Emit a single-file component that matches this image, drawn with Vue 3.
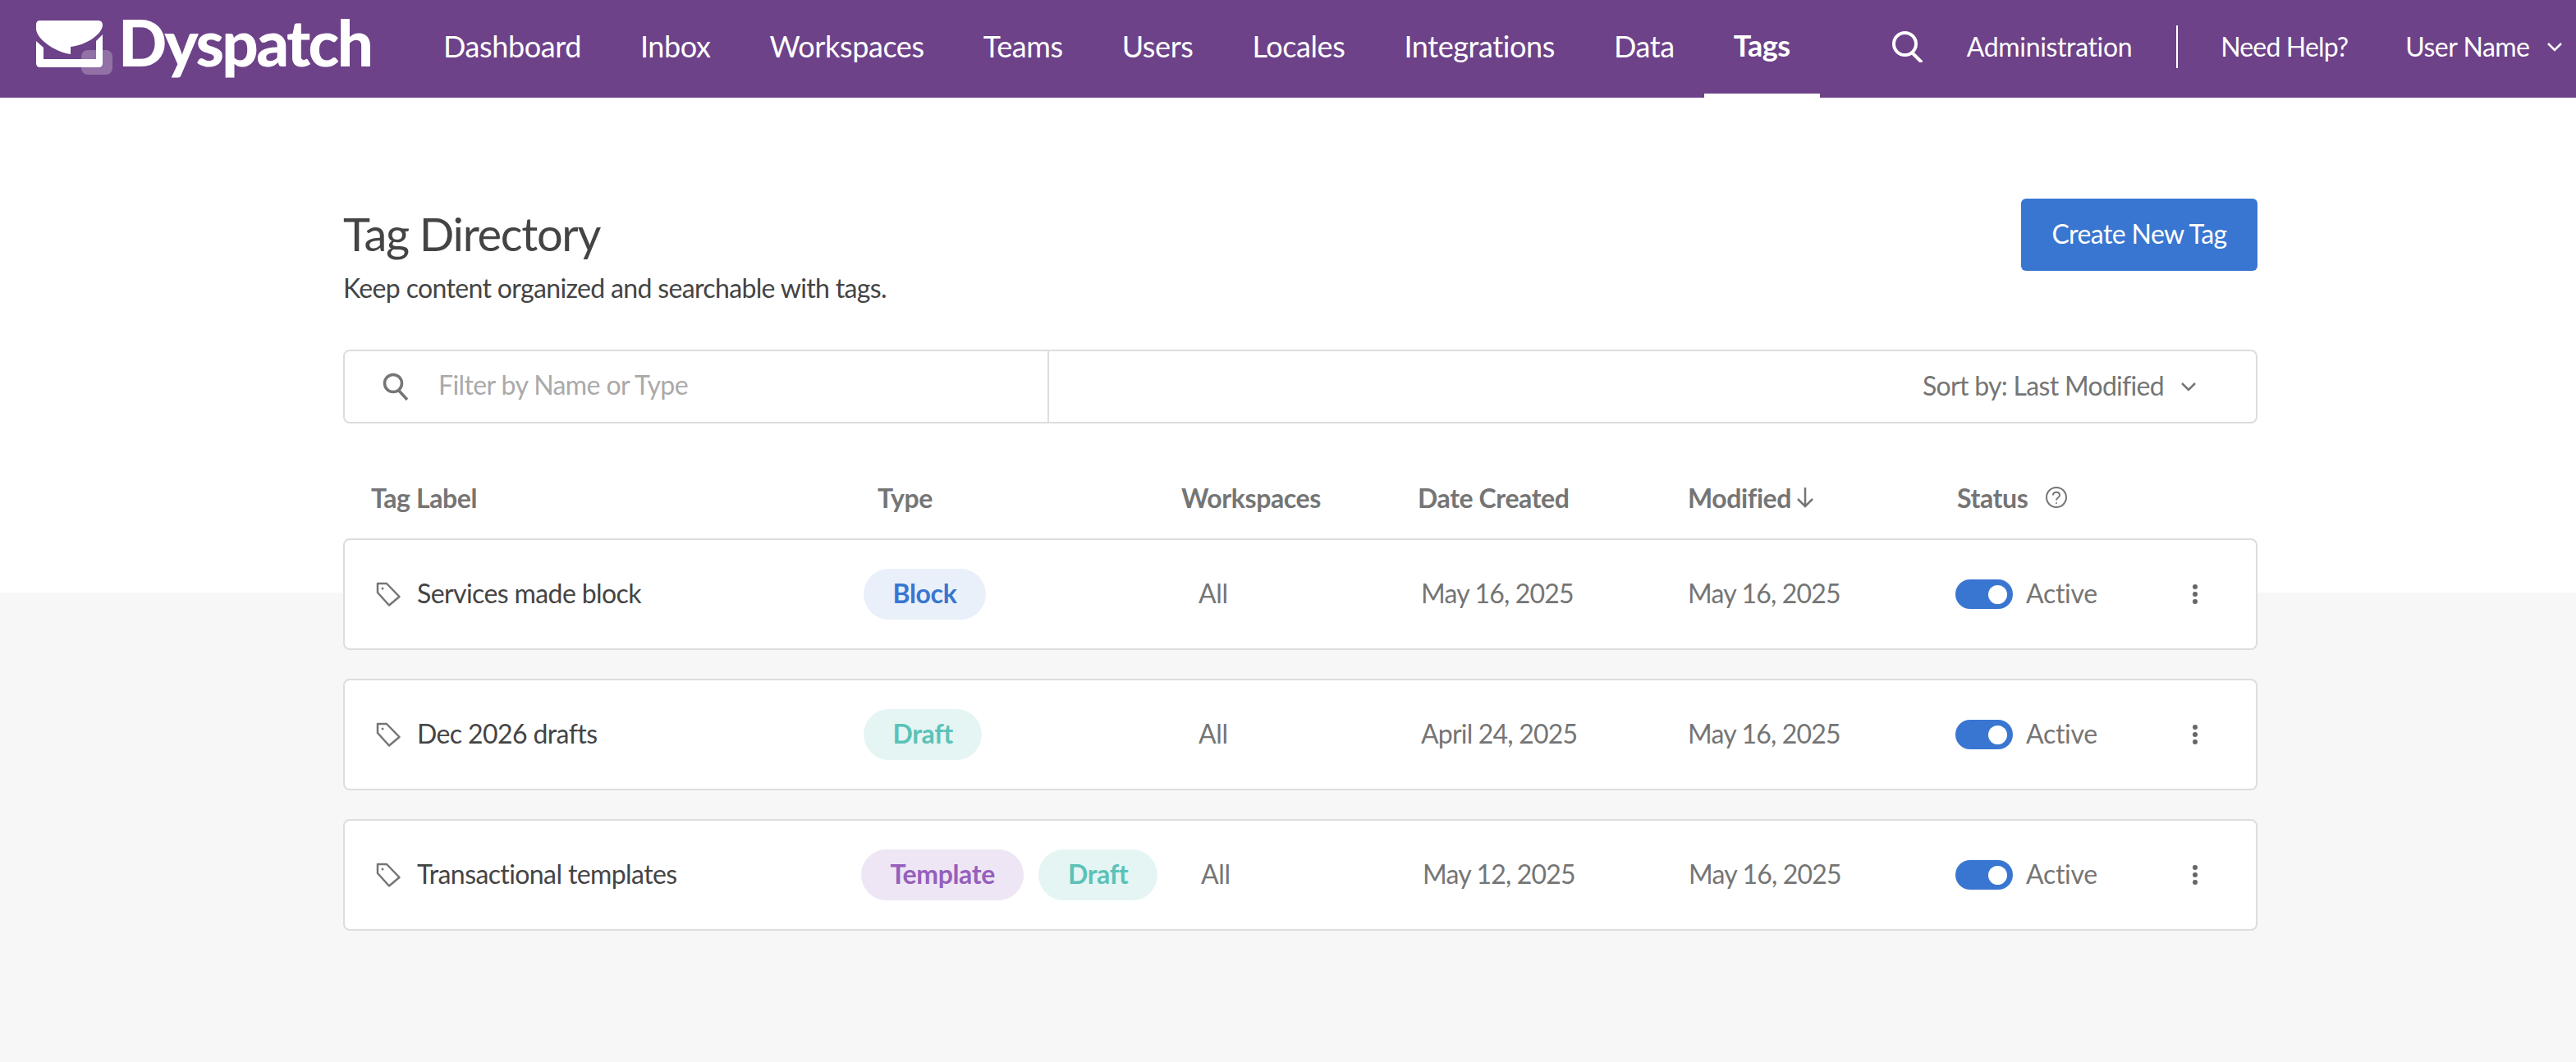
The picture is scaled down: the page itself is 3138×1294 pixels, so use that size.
<script setup>
const navItems = ['Dashboard', 'Inbox', 'Workspaces', 'Teams', 'Users', 'Locales', 'Integrations', 'Data', 'Tags'];

const columns = [
    { label: 'Tag Label' },
    { label: 'Type' },
    { label: 'Workspaces' },
    { label: 'Date Created' },
    { label: 'Modified', sorted: true },
    { label: 'Status', help: true },
];

const tags = [
    { name: 'Services made block', types: ['Block'], created: 'May 16, 2025', modified: 'May 16, 2025' },
    { name: 'Dec 2026 drafts', types: ['Draft'], created: 'April 24, 2025', modified: 'May 16, 2025' },
    { name: 'Transactional templates', types: ['Template', 'Draft'], created: 'May 12, 2025', modified: 'May 16, 2025' },
];
</script>

<template>
    <div class="page">
        <header class="nav">
            <div class="brand">
                <svg class="brand-mark" viewBox="40 20 100 74" width="100" height="74">
                    <path fill="#fff" d="M49 25H120Q125 25 125 31C124 42 105 55 86 57V66C70 64 46 50 44 36V30Q44 25 49 25Z" />
                    <path fill="#fff" d="M44 50L53 58V72H117V50L125 42V77Q125 82 120 82H49Q44 82 44 77Z" />
                    <rect x="99" y="61" width="38" height="30" rx="8" fill="#fff" fill-opacity="0.25" />
                </svg>
                <span class="brand-name">Dyspatch</span>
            </div>
            <nav class="nav-links">
                <a v-for="item in navItems" :key="item" :class="['nav-link', { 'nav-link--active': item === 'Tags' }]">{{ item }}</a>
            </nav>
            <div class="nav-right">
                <svg class="nav-search" viewBox="0 0 38 38" width="38" height="38" fill="none" stroke="#fff" stroke-width="4">
                    <circle cx="15.5" cy="15.5" r="13.5" />
                    <path d="M23 25L36 38" />
                </svg>
                <a class="nav-admin">Administration</a>
                <span class="nav-divider"></span>
                <a class="nav-help">Need Help?</a>
                <a class="nav-user">User Name</a>
                <svg viewBox="0 0 20 12" width="20" height="12" fill="none" stroke="#fff" stroke-width="2.5">
                    <path d="M2 2L10 10L18 2" />
                </svg>
            </div>
        </header>

        <div class="content">
            <main class="main">
                <div class="heading">
                    <div>
                        <h1 class="title">Tag Directory</h1>
                        <p class="subtitle">Keep content organized and searchable with tags.</p>
                    </div>
                    <button class="create-btn" type="button">Create New Tag</button>
                </div>

                <div class="toolbar">
                    <div class="filter">
                        <svg viewBox="0 0 32 34" width="32" height="34" fill="none" stroke="#757575" stroke-width="3.5">
                            <circle cx="13" cy="13" r="10.5" />
                            <path d="M20 22L30 33" />
                        </svg>
                        <span class="filter-placeholder">Filter by Name or Type</span>
                    </div>
                    <div class="sort">
                        <span class="sort-label">Sort by: Last Modified</span>
                        <svg viewBox="0 0 20 12" width="20" height="12" fill="none" stroke="#757575" stroke-width="2.5">
                            <path d="M2 2L10 10L18 2" />
                        </svg>
                    </div>
                </div>

                <div class="columns">
                    <div v-for="col in columns" :key="col.label" class="column">
                        {{ col.label }}
                        <svg v-if="col.sorted" class="sort-arrow" viewBox="0 0 22 26" width="22" height="26" fill="none" stroke="#757575" stroke-width="2.5">
                            <path d="M11 1V24M2 15L11 24L20 15" />
                        </svg>
                        <svg v-if="col.help" class="help-icon" viewBox="0 0 26 26" width="26" height="26" fill="none" stroke="#757575" stroke-width="2">
                            <circle cx="13" cy="13" r="12" />
                            <path d="M9 10.5C9 5.5 17 5.5 17 10.5C17 13.5 13 13 13 16.5" />
                            <circle cx="13" cy="20" r="1" fill="#757575" stroke="none" />
                        </svg>
                    </div>
                </div>

                <div class="rows">
                    <div v-for="tag in tags" :key="tag.name" :class="['row', { 'row--wide': tag.types.length > 1 }]">
                        <div class="row-name">
                            <svg viewBox="0 0 30 30" width="30" height="30" fill="none" stroke="#757575" stroke-width="2.5" stroke-linejoin="round">
                                <path d="M2 2H13L28.5 18L16 28.5L2 13Z" />
                                <circle cx="8" cy="8" r="1.5" fill="#757575" stroke="none" />
                            </svg>
                            <span class="row-label">{{ tag.name }}</span>
                        </div>
                        <div class="row-types">
                            <span v-for="type in tag.types" :key="type" :class="['pill', `pill--${type.toLowerCase()}`]">{{ type }}</span>
                        </div>
                        <div class="cell">All</div>
                        <div class="cell cell--date">{{ tag.created }}</div>
                        <div class="cell cell--date">{{ tag.modified }}</div>
                        <div class="status">
                            <span class="toggle"><span class="toggle-knob"></span></span>
                            <span class="cell">Active</span>
                        </div>
                        <div class="dots"><i></i><i></i><i></i></div>
                    </div>
                </div>
            </main>
        </div>
    </div>
</template>

<style>
html,
body {
    margin: 0;
    background: #f7f7f7;
}
</style>

<style scoped>
.page {
    height: 1294px;
    overflow: hidden;
    font-family: Lato, "Open Sans", sans-serif;
    font-size: 32px;
    letter-spacing: -0.6px;
    white-space: nowrap;
    color: #444;
}

.nav {
    display: flex;
    align-items: center;
    height: 119px;
    background: #6d4289;
    color: #fff;
}

.brand {
    display: flex;
    align-items: center;
    flex: none;
    width: 504px;
    height: 119px;
}

.brand-mark {
    flex: none;
    align-self: flex-start;
    margin: 20px 0 0 40px;
}

.brand-name {
    margin: -17px 0 0 4px;
    font-size: 78px;
    font-weight: 900;
    letter-spacing: -2.6px;
    line-height: 1;
}

.nav-links {
    display: flex;
    align-self: stretch;
}

.nav-link {
    display: flex;
    align-items: center;
    box-sizing: border-box;
    padding: 0 36px 8px;
    font-size: 36px;
    letter-spacing: -0.4px;
}

.nav-link--active {
    padding-bottom: 5px;
    font-weight: 700;
    border-bottom: 5px solid #fff;
}

.nav-right {
    display: flex;
    align-items: center;
    margin-left: 88px;
    padding-bottom: 6px;
    letter-spacing: -0.35px;
}

.nav-search {
    margin-right: 53px;
}

.nav-divider {
    width: 2px;
    height: 52px;
    margin: 0 52px 0 54px;
    background: #fff;
}

.nav-help {
    letter-spacing: -0.85px;
}

.nav-user {
    margin-left: 70px;
    margin-right: 20px;
    letter-spacing: -0.5px;
}

.content {
    height: 1175px;
    background: linear-gradient(#fff 603px, #f7f7f7 603px);
}

.main {
    width: 2332px;
    margin-left: 418px;
}

.heading {
    display: flex;
    align-items: flex-start;
    justify-content: space-between;
    padding-top: 123px;
}

.title {
    margin: -1px 0 0;
    font-size: 56px;
    font-weight: 400;
    line-height: 88px;
    letter-spacing: -1.3px;
}

.subtitle {
    margin: 0;
    line-height: 44px;
    letter-spacing: -0.65px;
}

.create-btn {
    width: 288px;
    height: 88px;
    padding: 0 0 4px;
    border: 0;
    border-radius: 6px;
    background: #3976d1;
    color: #fff;
    font: inherit;
    letter-spacing: inherit;
    cursor: pointer;
}

.toolbar {
    display: flex;
    box-sizing: border-box;
    height: 90px;
    margin-top: 53px;
    border: 2px solid #ddd;
    border-radius: 8px;
    background: #fff;
}

.filter {
    display: flex;
    align-items: center;
    gap: 36px;
    box-sizing: border-box;
    width: 858px;
    padding-left: 46px;
    border-right: 2px solid #ddd;
}

.filter-placeholder {
    padding-bottom: 6px;
    color: #aaa;
}

.sort {
    display: flex;
    flex: 1;
    align-items: center;
    justify-content: flex-end;
    gap: 20px;
    padding-right: 72px;
    color: #757575;
}

.sort-label {
    padding-bottom: 4px;
    letter-spacing: -0.7px;
}

.columns {
    display: grid;
    grid-template-columns: 617px 370px 288px 329px 328px 1fr;
    align-items: center;
    box-sizing: border-box;
    height: 140px;
    padding: 40px 0 0 34px;
    color: #757575;
    font-weight: 700;
    letter-spacing: -0.4px;
}

.column {
    display: flex;
    align-items: center;
}

.sort-arrow {
    margin-left: 6px;
}

.help-icon {
    margin-left: 22px;
}

.rows {
    display: flex;
    flex-direction: column;
    gap: 35px;
}

.row {
    display: grid;
    grid-template-columns: 594px 408px 271px 325px 326px 282px 1fr;
    align-items: center;
    box-sizing: border-box;
    height: 136px;
    padding-left: 38px;
    border: 2px solid #ddd;
    border-radius: 8px;
    background: #fff;
}

.row--wide {
    grid-template-columns: 591px 414px 270px 324px 325px 282px 1fr;
}

.row-name {
    display: flex;
    align-items: center;
    gap: 20px;
}

.row-label {
    padding-bottom: 4px;
}

.row-types {
    display: flex;
    gap: 18px;
}

.pill {
    display: flex;
    align-items: center;
    box-sizing: border-box;
    height: 62px;
    padding: 0 35.5px 4px;
    border-radius: 31px;
    font-weight: 700;
    letter-spacing: -0.35px;
}

.pill--block {
    color: #3976d1;
    background: #eaf0fa;
}

.pill--draft {
    color: #5bc2b8;
    background: #e5f5f3;
}

.pill--template {
    color: #9560bc;
    background: #eee6f4;
}

.cell {
    padding-bottom: 4px;
    color: #757575;
    letter-spacing: -0.3px;
}

.cell--date {
    letter-spacing: -0.8px;
}

.status {
    display: flex;
    align-items: center;
    gap: 16px;
}

.toggle {
    display: flex;
    align-items: center;
    justify-content: flex-end;
    box-sizing: border-box;
    width: 70px;
    height: 36px;
    padding-right: 7px;
    border-radius: 18px;
    background: #3976d1;
}

.toggle-knob {
    width: 23px;
    height: 23px;
    border-radius: 50%;
    background: #fff;
}

.dots {
    display: flex;
    flex-direction: column;
    gap: 3px;
    padding-left: 7px;
}

.dots i {
    width: 6px;
    height: 6px;
    border-radius: 50%;
    background: #666;
}
</style>
